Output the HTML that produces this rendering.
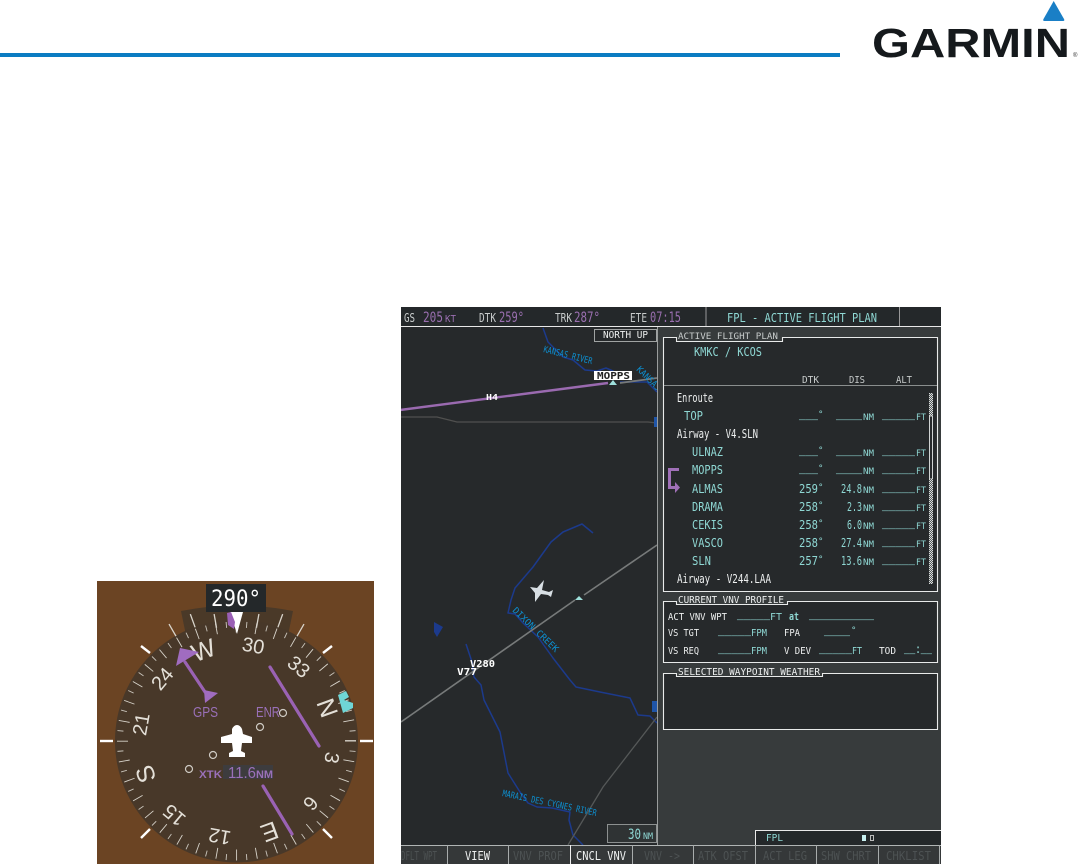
<!DOCTYPE html>
<html><head><meta charset="utf-8"><title>Garmin</title>
<style>
html,body{margin:0;padding:0;background:#fff;width:1080px;height:864px;overflow:hidden}
svg{display:block}
text{font-family:"DejaVu Sans Mono",monospace;font-size:12px;white-space:pre}
.w{fill:#eef0f0}.t{fill:#8fd8d4}.p{fill:#9a6fb0}.d{fill:#4d5253}.g{fill:#c8cccc}
.u{font-family:"Liberation Mono",monospace;font-weight:bold}.s{font-size:9px}.b{fill:#0d8fd0;font-size:9px}
.c{font-family:"Liberation Sans",sans-serif;fill:#e4e0d8;font-size:20px;text-anchor:middle}
.k{fill:#fff;font-weight:bold}
</style></head><body>
<svg width="1080" height="864" viewBox="0 0 1080 864" xmlns="http://www.w3.org/2000/svg">
<defs><pattern id="ck" width="2" height="2" patternUnits="userSpaceOnUse"><rect width="2" height="2" fill="#555a5a"/><rect width="1" height="1" fill="#d8dbdb"/><rect x="1" y="1" width="1" height="1" fill="#d8dbdb"/></pattern></defs>
<rect width="1080" height="864" fill="#fff"/>
<rect x="0" y="53" width="840" height="4" fill="#0b7cc2"/>
<path d="M1053.7,1 L1064,19 Q1065,21 1063,21 H1044.5 Q1042.5,21 1043.5,19 Z" fill="#1a7fc6"/>
<text x="872" y="57" textLength="198" lengthAdjust="spacingAndGlyphs" style="font-family:'Liberation Sans',sans-serif;font-weight:bold;font-size:41px;fill:#15191c">GARMIN</text>
<text x="1073" y="57" style="font-family:'Liberation Sans',sans-serif;font-size:6px;fill:#333">®</text>

<!-- HSI -->
<rect x="97" y="581" width="277" height="283" fill="#6b4423"/>
<clipPath id="cl"><rect x="97" y="581" width="277" height="283"/></clipPath>
<g clip-path="url(#cl)">
<path d="M181,611 Q237,600 293,611 L286,645 H188 Z" fill="#4a3928"/>
<circle cx="236.5" cy="741" r="121.5" fill="#483829"/>
<circle cx="236.5" cy="741" r="114" fill="none" stroke="#d8d4cb" stroke-width="11" pathLength="360" stroke-dasharray="0.45 9.55" stroke-dashoffset="0.22"/>
<circle cx="236.5" cy="741" r="116.5" fill="none" stroke="#c8c3ba" stroke-width="6" pathLength="360" stroke-dasharray="0.45 9.55" stroke-dashoffset="5.22"/>
<g stroke="#d8d4cb" stroke-width="1.3">
<line x1="236.5" y1="606" x2="236.5" y2="620" transform="rotate(-30 236.5 741)"/>
<line x1="236.5" y1="606" x2="236.5" y2="620" transform="rotate(-20 236.5 741)"/>
<line x1="236.5" y1="612" x2="236.5" y2="626" transform="rotate(-10 236.5 741)"/>
<line x1="236.5" y1="612" x2="236.5" y2="626" transform="rotate(10 236.5 741)"/>
<line x1="236.5" y1="606" x2="236.5" y2="620" transform="rotate(20 236.5 741)"/>
<line x1="236.5" y1="606" x2="236.5" y2="620" transform="rotate(30 236.5 741)"/>
</g>
<g stroke="#fff" stroke-width="2.4">
<line x1="100" y1="741" x2="113" y2="741"/><line x1="360" y1="741" x2="373" y2="741"/>
<line x1="141" y1="646" x2="150" y2="653"/><line x1="332" y1="646" x2="323" y2="653"/>
<line x1="141" y1="838" x2="150" y2="829"/><line x1="332" y1="838" x2="323" y2="829"/>
</g>
<g class="cg">
<text class="c" x="236.5" y="651" transform="rotate(10 236.5 741)">30</text>
<text class="c" x="236.5" y="651" transform="rotate(40 236.5 741)">33</text>
<text class="c" x="236.5" y="653" transform="rotate(70 236.5 741)" style="font-size:25px">N</text>
<text class="c" x="236.5" y="651" transform="rotate(100 236.5 741)">3</text>
<text class="c" x="236.5" y="651" transform="rotate(130 236.5 741)">6</text>
<text class="c" x="236.5" y="653" transform="rotate(160 236.5 741)" style="font-size:25px">E</text>
<text class="c" x="236.5" y="651" transform="rotate(190 236.5 741)">12</text>
<text class="c" x="236.5" y="651" transform="rotate(220 236.5 741)">15</text>
<text class="c" x="236.5" y="653" transform="rotate(250 236.5 741)" style="font-size:25px">S</text>
<text class="c" x="236.5" y="651" transform="rotate(280 236.5 741)">21</text>
<text class="c" x="236.5" y="651" transform="rotate(310 236.5 741)">24</text>
<text class="c" x="236.5" y="653" transform="rotate(340 236.5 741)" style="font-size:25px">W</text>
</g>
<polygon points="230,612 243,612 237,634" fill="#fff"/>
<polygon points="227,613 231,612 235,622 234,629 228,625" fill="#9a5fb5"/>
<rect x="206" y="584" width="60" height="28" fill="#24282a"/>
<text x="211" y="606" textLength="50" lengthAdjust="spacingAndGlyphs" style="font-size:22px;fill:#fff">290°</text>
<g stroke="#9a62b4" stroke-width="3.2" stroke-linecap="round" fill="none">
<line x1="270" y1="667" x2="319" y2="746"/>
<line x1="263" y1="786" x2="292" y2="834"/>
<line x1="185" y1="662" x2="205" y2="692"/>
</g>
<polygon points="180,648 199,652 176,666" fill="#a06cc0"/>
<polygon points="204,690 218,693 205,703" fill="#a06cc0"/>
<path d="M338,695 L346,691 L349,697 L344,700 L353,703 L353,708 L343,713 Z" fill="#6fd6d6"/>
<text x="193" y="717" textLength="25" lengthAdjust="spacingAndGlyphs" style="font-family:'Liberation Sans',sans-serif;font-size:15px;fill:#9a70b8">GPS</text>
<text x="256" y="717" textLength="24" lengthAdjust="spacingAndGlyphs" style="font-family:'Liberation Sans',sans-serif;font-size:15px;fill:#9a70b8">ENR</text>
<g fill="none" stroke="#cfcbc4" stroke-width="1.2">
<circle cx="283" cy="713" r="3.5"/><circle cx="260" cy="727" r="3.5"/><circle cx="213" cy="755" r="3.5"/><circle cx="189" cy="769" r="3.5"/>
</g>
<path d="M232,729 Q234,725 237,725 Q240,725 242,729 L243,734 L252,737 V743 H242 L241,751 L245,753 V757 H229 V753 L233,751 L232,743 H221 V737 L232,734 Z" fill="#fff"/>
<rect x="223" y="765" width="50" height="14" fill="#3d3c3e"/>
<text x="199" y="778" textLength="23" lengthAdjust="spacingAndGlyphs" style="font-family:'Liberation Sans',sans-serif;font-weight:bold;font-size:11px;fill:#9a70b8">XTK</text>
<text x="228" y="778" textLength="28" lengthAdjust="spacingAndGlyphs" style="font-family:'Liberation Sans',sans-serif;font-size:16px;fill:#9a70b8">11.6</text>
<text x="256" y="778" textLength="17" lengthAdjust="spacingAndGlyphs" style="font-family:'Liberation Sans',sans-serif;font-weight:bold;font-size:11px;fill:#9a70b8">NM</text>
</g>

<!-- G1000 frame -->
<rect x="401" y="307" width="540" height="557" fill="#373b3c"/>
<rect x="401" y="307" width="540" height="19" fill="#24282a"/>
<rect x="401" y="326" width="540" height="1" fill="#e8e8e8"/>
<rect x="705.5" y="307" width="1" height="19" fill="#999"/>
<rect x="899" y="307" width="1" height="19" fill="#999"/>
<text class="g" x="404" y="322" textLength="11" lengthAdjust="spacingAndGlyphs">GS</text>
<text class="p" x="423" y="322" textLength="20" lengthAdjust="spacingAndGlyphs" style="font-size:14px">205</text>
<text class="p" x="445" y="322" textLength="11" lengthAdjust="spacingAndGlyphs" style="font-size:10px">KT</text>
<text class="g" x="479" y="322" textLength="17" lengthAdjust="spacingAndGlyphs">DTK</text>
<text class="p" x="499" y="322" textLength="25" lengthAdjust="spacingAndGlyphs" style="font-size:14px">259°</text>
<text class="g" x="555" y="322" textLength="17" lengthAdjust="spacingAndGlyphs">TRK</text>
<text class="p" x="574" y="322" textLength="26" lengthAdjust="spacingAndGlyphs" style="font-size:14px">287°</text>
<text class="g" x="630" y="322" textLength="17" lengthAdjust="spacingAndGlyphs">ETE</text>
<text class="p" x="650" y="322" textLength="31" lengthAdjust="spacingAndGlyphs" style="font-size:14px">07:15</text>
<text class="t" x="727" y="322" textLength="150" lengthAdjust="spacingAndGlyphs" style="font-size:12px">FPL - ACTIVE FLIGHT PLAN</text>

<!-- Map -->
<clipPath id="mp"><rect x="401" y="327" width="256" height="518"/></clipPath>
<rect x="401" y="327" width="256" height="518" fill="#26292b"/>
<g clip-path="url(#mp)">
<g fill="none" stroke="#1c3a8c" stroke-width="1.5" stroke-linejoin="round">
<polyline points="543,328 548,342 563,357 573,360 585,370 597,371 606,368 613,371 617,378"/>
<polyline points="620,382 647,382 657,392"/>
<polyline points="593,533 582,524 563,532 551,542 533,567 515,588 511,600 508,613 515,614 523,623 538,637 553,658 570,680 576,687 600,692 630,698 638,715 650,716 657,723"/>
<polyline points="466,644 472,662 474,677 481,685 484,700 500,732 508,773 520,792 528,803 537,807 552,808 570,812 569,820 573,835 583,845"/>
</g>
<polygon points="434,622 443,627 437,637 434,632" fill="#1c3a8c"/>
<polyline points="401,417 437,417 457,422 648,422 657,423" fill="none" stroke="#50504f" stroke-width="1.2"/>
<line x1="401" y1="722" x2="575" y2="600" stroke="#777a7a" stroke-width="1.6"/>
<line x1="584" y1="595" x2="657" y2="545" stroke="#777a7a" stroke-width="1.6"/>
<polyline points="657,717 603,787 568,845" fill="none" stroke="#555858" stroke-width="1.3"/>
<line x1="400" y1="410" x2="608" y2="383" stroke="#9a6ab0" stroke-width="2.4"/>
<line x1="620" y1="383" x2="657" y2="378" stroke="#777a7a" stroke-width="1.8"/>
<polygon points="613,380 617,385 609,385" fill="#9ee0dc"/>
<polygon points="579,596 583,600 575,600" fill="#9ee0dc"/>
<text class="b" x="543" y="352" textLength="50" lengthAdjust="spacingAndGlyphs" transform="rotate(14 543 352)">KANSAS RIVER</text>
<text class="b" x="636" y="370" textLength="30" lengthAdjust="spacingAndGlyphs" transform="rotate(45 636 370)">KANSAS</text>
<text class="b" x="512" y="611" textLength="60" lengthAdjust="spacingAndGlyphs" transform="rotate(44 512 611)">DIXON CREEK</text>
<text class="b" x="502" y="796" textLength="96" lengthAdjust="spacingAndGlyphs" transform="rotate(12 502 796)">MARAIS DES CYGNES RIVER</text>
<rect x="594" y="371" width="38" height="9" fill="#fff"/>
<text x="597" y="379" textLength="33" lengthAdjust="spacingAndGlyphs" style="font-size:10px;font-weight:bold;fill:#222">MOPPS</text>
<text class="k" x="486" y="400" textLength="12" lengthAdjust="spacingAndGlyphs" style="font-size:8px">H4</text>
<text class="k" x="470" y="667" textLength="25" lengthAdjust="spacingAndGlyphs" style="font-size:10px">V280</text>
<text class="k" x="457" y="675" textLength="20" lengthAdjust="spacingAndGlyphs" style="font-size:10px">V77</text>
<path d="M530,587 L537,588 L544,580 L542,590 L549,592 L553,590 L551,597 L548,595 L541,594 L535,602 L535,593 Z" fill="#d8dfe4"/>
<rect x="654" y="417" width="4" height="10" fill="#1f55a8"/>
<rect x="652" y="701" width="6" height="11" fill="#1f55a8"/>
</g>
<rect x="657" y="327" width="1" height="518" fill="#9a9d9d"/>
<rect x="594.5" y="329.5" width="62" height="12" fill="#26292b" stroke="#a0a3a3"/>
<text class="w" x="603" y="338" textLength="45" lengthAdjust="spacingAndGlyphs" style="font-size:10px">NORTH UP</text>
<rect x="607.5" y="824.5" width="49" height="18" fill="#2f3334" stroke="#8c9090"/>
<text class="t" x="628" y="839" textLength="13" lengthAdjust="spacingAndGlyphs" style="font-size:14px">30</text>
<text class="t" x="643" y="839" textLength="10" lengthAdjust="spacingAndGlyphs" style="font-size:9px">NM</text>

<!-- Active flight plan panel -->
<path d="M663.5,337.5 H676.5 V341.5 H782.5 V337.5 H937.5 V591.5 H663.5 Z" fill="#26292b" stroke="#e8eaea" stroke-width="1.1"/>
<rect x="664" y="385" width="273" height="1" fill="#8a8e8e"/>
<text class="g" x="678" y="339" textLength="100" lengthAdjust="spacingAndGlyphs" style="font-size:8.5px">ACTIVE FLIGHT PLAN</text>
<text class="t" x="694" y="356" textLength="68" lengthAdjust="spacingAndGlyphs">KMKC / KCOS</text>
<text class="g" x="802" y="383" textLength="17" lengthAdjust="spacingAndGlyphs" style="font-size:10px">DTK</text>
<text class="g" x="849" y="383" textLength="16" lengthAdjust="spacingAndGlyphs" style="font-size:10px">DIS</text>
<text class="g" x="896" y="383" textLength="16" lengthAdjust="spacingAndGlyphs" style="font-size:10px">ALT</text>

<text class="w" x="677" y="402" textLength="36" lengthAdjust="spacingAndGlyphs">Enroute</text>
<text class="t" x="684" y="420" textLength="19" lengthAdjust="spacingAndGlyphs">TOP</text>
<text class="w" x="677" y="438" textLength="81" lengthAdjust="spacingAndGlyphs">Airway - V4.SLN</text>
<text class="t" x="692" y="456" textLength="31" lengthAdjust="spacingAndGlyphs">ULNAZ</text>
<text class="t" x="692" y="474" textLength="31" lengthAdjust="spacingAndGlyphs">MOPPS</text>
<text class="t" x="692" y="493" textLength="31" lengthAdjust="spacingAndGlyphs">ALMAS</text>
<text class="t" x="692" y="511" textLength="31" lengthAdjust="spacingAndGlyphs">DRAMA</text>
<text class="t" x="692" y="529" textLength="31" lengthAdjust="spacingAndGlyphs">CEKIS</text>
<text class="t" x="692" y="547" textLength="31" lengthAdjust="spacingAndGlyphs">VASCO</text>
<text class="t" x="692" y="565" textLength="19" lengthAdjust="spacingAndGlyphs">SLN</text>
<text class="w" x="677" y="583" textLength="94" lengthAdjust="spacingAndGlyphs">Airway - V244.LAA</text>

<!-- DTK col -->
<text class="t u" x="799" y="419" textLength="19" lengthAdjust="spacingAndGlyphs">___</text><text class="t s" x="818" y="417">°</text>
<text class="t u" x="799" y="455" textLength="19" lengthAdjust="spacingAndGlyphs">___</text><text class="t s" x="818" y="453">°</text>
<text class="t u" x="799" y="473" textLength="19" lengthAdjust="spacingAndGlyphs">___</text><text class="t s" x="818" y="471">°</text>
<text class="t" x="799" y="493" textLength="19" lengthAdjust="spacingAndGlyphs">259</text><text class="t s" x="818" y="490">°</text>
<text class="t" x="799" y="511" textLength="19" lengthAdjust="spacingAndGlyphs">258</text><text class="t s" x="818" y="508">°</text>
<text class="t" x="799" y="529" textLength="19" lengthAdjust="spacingAndGlyphs">258</text><text class="t s" x="818" y="526">°</text>
<text class="t" x="799" y="547" textLength="19" lengthAdjust="spacingAndGlyphs">258</text><text class="t s" x="818" y="544">°</text>
<text class="t" x="799" y="565" textLength="19" lengthAdjust="spacingAndGlyphs">257</text><text class="t s" x="818" y="562">°</text>
<!-- DIS col -->
<text class="t u" x="836" y="419" textLength="26" lengthAdjust="spacingAndGlyphs">____</text><text class="t s" x="863" y="420" textLength="11" lengthAdjust="spacingAndGlyphs">NM</text>
<text class="t u" x="836" y="455" textLength="26" lengthAdjust="spacingAndGlyphs">____</text><text class="t s" x="863" y="456" textLength="11" lengthAdjust="spacingAndGlyphs">NM</text>
<text class="t u" x="836" y="473" textLength="26" lengthAdjust="spacingAndGlyphs">____</text><text class="t s" x="863" y="474" textLength="11" lengthAdjust="spacingAndGlyphs">NM</text>
<text class="t" x="841" y="493" textLength="21" lengthAdjust="spacingAndGlyphs">24.8</text><text class="t s" x="863" y="493" textLength="11" lengthAdjust="spacingAndGlyphs">NM</text>
<text class="t" x="847" y="511" textLength="15" lengthAdjust="spacingAndGlyphs">2.3</text><text class="t s" x="863" y="511" textLength="11" lengthAdjust="spacingAndGlyphs">NM</text>
<text class="t" x="847" y="529" textLength="15" lengthAdjust="spacingAndGlyphs">6.0</text><text class="t s" x="863" y="529" textLength="11" lengthAdjust="spacingAndGlyphs">NM</text>
<text class="t" x="841" y="547" textLength="21" lengthAdjust="spacingAndGlyphs">27.4</text><text class="t s" x="863" y="547" textLength="11" lengthAdjust="spacingAndGlyphs">NM</text>
<text class="t" x="841" y="565" textLength="21" lengthAdjust="spacingAndGlyphs">13.6</text><text class="t s" x="863" y="565" textLength="11" lengthAdjust="spacingAndGlyphs">NM</text>
<!-- ALT col -->
<text class="t u" x="882" y="419" textLength="33" lengthAdjust="spacingAndGlyphs">_____</text><text class="t s" x="916" y="420" textLength="10" lengthAdjust="spacingAndGlyphs">FT</text>
<text class="t u" x="882" y="455" textLength="33" lengthAdjust="spacingAndGlyphs">_____</text><text class="t s" x="916" y="456" textLength="10" lengthAdjust="spacingAndGlyphs">FT</text>
<text class="t u" x="882" y="473" textLength="33" lengthAdjust="spacingAndGlyphs">_____</text><text class="t s" x="916" y="474" textLength="10" lengthAdjust="spacingAndGlyphs">FT</text>
<text class="t u" x="882" y="492" textLength="33" lengthAdjust="spacingAndGlyphs">_____</text><text class="t s" x="916" y="493" textLength="10" lengthAdjust="spacingAndGlyphs">FT</text>
<text class="t u" x="882" y="510" textLength="33" lengthAdjust="spacingAndGlyphs">_____</text><text class="t s" x="916" y="511" textLength="10" lengthAdjust="spacingAndGlyphs">FT</text>
<text class="t u" x="882" y="528" textLength="33" lengthAdjust="spacingAndGlyphs">_____</text><text class="t s" x="916" y="529" textLength="10" lengthAdjust="spacingAndGlyphs">FT</text>
<text class="t u" x="882" y="546" textLength="33" lengthAdjust="spacingAndGlyphs">_____</text><text class="t s" x="916" y="547" textLength="10" lengthAdjust="spacingAndGlyphs">FT</text>
<text class="t u" x="882" y="564" textLength="33" lengthAdjust="spacingAndGlyphs">_____</text><text class="t s" x="916" y="565" textLength="10" lengthAdjust="spacingAndGlyphs">FT</text>

<!-- scrollbar -->
<rect x="929" y="393" width="4" height="23" fill="url(#ck)"/>
<rect x="929.5" y="416" width="3" height="63" fill="none" stroke="#d0d3d3" stroke-width="1"/>
<rect x="929" y="479" width="4" height="105" fill="url(#ck)"/>
<path d="M679,469.5 H669.5 V487.5 H676" fill="none" stroke="#a070b8" stroke-width="3"/>
<polygon points="675,482 680,487.5 675,493" fill="#a070b8"/>

<!-- VNV panel -->
<path d="M663.5,601.5 H676.5 V604.5 H787.5 V601.5 H937.5 V662.5 H663.5 Z" fill="#26292b" stroke="#e8eaea" stroke-width="1.1"/>
<text class="w" x="678" y="603" textLength="106" lengthAdjust="spacingAndGlyphs" style="font-size:10px">CURRENT VNV PROFILE</text>
<text class="w" x="668" y="620" textLength="59" lengthAdjust="spacingAndGlyphs" style="font-size:10px">ACT VNV WPT</text>
<text class="t u" x="737" y="619" textLength="33" lengthAdjust="spacingAndGlyphs">_____</text>
<text class="t" x="770" y="620" textLength="12" lengthAdjust="spacingAndGlyphs" style="font-size:10px">FT</text>
<text class="t" x="789" y="620" textLength="10" lengthAdjust="spacingAndGlyphs" style="font-size:11px;font-weight:bold">at</text>
<text class="t u" x="809" y="619" textLength="65" lengthAdjust="spacingAndGlyphs">__________</text>
<text class="w" x="668" y="636" textLength="31" lengthAdjust="spacingAndGlyphs" style="font-size:10px">VS TGT</text>
<text class="t u" x="718" y="635" textLength="33" lengthAdjust="spacingAndGlyphs">_____</text>
<text class="t" x="751" y="636" textLength="16" lengthAdjust="spacingAndGlyphs" style="font-size:10px">FPM</text>
<text class="w" x="784" y="636" textLength="16" lengthAdjust="spacingAndGlyphs" style="font-size:10px">FPA</text>
<text class="t u" x="824" y="635" textLength="26" lengthAdjust="spacingAndGlyphs">____</text><text class="t s" x="851" y="633">°</text>
<text class="w" x="668" y="654" textLength="31" lengthAdjust="spacingAndGlyphs" style="font-size:10px">VS REQ</text>
<text class="t u" x="718" y="653" textLength="33" lengthAdjust="spacingAndGlyphs">_____</text>
<text class="t" x="751" y="654" textLength="16" lengthAdjust="spacingAndGlyphs" style="font-size:10px">FPM</text>
<text class="w" x="784" y="654" textLength="27" lengthAdjust="spacingAndGlyphs" style="font-size:10px">V DEV</text>
<text class="t u" x="819" y="653" textLength="33" lengthAdjust="spacingAndGlyphs">_____</text>
<text class="t" x="852" y="654" textLength="10" lengthAdjust="spacingAndGlyphs" style="font-size:10px">FT</text>
<text class="w" x="879" y="654" textLength="17" lengthAdjust="spacingAndGlyphs" style="font-size:10px">TOD</text>
<text class="t u" x="904" y="653" textLength="28" lengthAdjust="spacingAndGlyphs">__:__</text>

<!-- WX panel -->
<path d="M663.5,673.5 H676.5 V676.5 H822.5 V673.5 H937.5 V729.5 H663.5 Z" fill="#26292b" stroke="#e8eaea" stroke-width="1.1"/>
<text class="w" x="678" y="675" textLength="142" lengthAdjust="spacingAndGlyphs" style="font-size:10px">SELECTED WAYPOINT WEATHER</text>

<!-- Softkeys -->
<rect x="755" y="830" width="186" height="15" fill="#24282a"/>
<rect x="755" y="830" width="186" height="1" fill="#e8e8e8"/>
<rect x="755" y="830" width="1" height="15" fill="#e8e8e8"/>
<text class="t" x="766" y="841" textLength="17" lengthAdjust="spacingAndGlyphs" style="font-size:10px">FPL</text>
<rect x="862" y="835" width="4" height="6" fill="#c8f0f0"/>
<rect x="870.5" y="835.5" width="3" height="5" fill="none" stroke="#bbb"/>
<rect x="401" y="846" width="540" height="18" fill="#353839"/>
<rect x="401" y="845" width="540" height="1" fill="#b0b4b4"/>
<g fill="#a8acac">
<rect x="447" y="845" width="1" height="19"/><rect x="508" y="845" width="1" height="19"/>
<rect x="570" y="845" width="1" height="19" fill="#eee"/><rect x="632" y="845" width="1" height="19"/>
<rect x="693" y="845" width="1" height="19"/><rect x="755" y="845" width="1" height="19"/>
<rect x="816" y="845" width="1" height="19"/><rect x="878" y="845" width="1" height="19"/><rect x="939" y="845" width="1" height="19"/>
</g>
<text class="d" x="401" y="860" textLength="36" lengthAdjust="spacingAndGlyphs">DFLT WPT</text>
<text class="w" x="465" y="860" textLength="25" lengthAdjust="spacingAndGlyphs">VIEW</text>
<text class="d" x="513" y="860" textLength="50" lengthAdjust="spacingAndGlyphs">VNV PROF</text>
<text class="w" x="576" y="860" textLength="50" lengthAdjust="spacingAndGlyphs">CNCL VNV</text>
<text class="d" x="644" y="860" textLength="36" lengthAdjust="spacingAndGlyphs">VNV -&gt;</text>
<text class="d" x="698" y="860" textLength="50" lengthAdjust="spacingAndGlyphs">ATK OFST</text>
<text class="d" x="763" y="860" textLength="44" lengthAdjust="spacingAndGlyphs">ACT LEG</text>
<text class="d" x="821" y="860" textLength="50" lengthAdjust="spacingAndGlyphs">SHW CHRT</text>
<text class="d" x="886" y="860" textLength="45" lengthAdjust="spacingAndGlyphs">CHKLIST</text>
</svg>
</body></html>
